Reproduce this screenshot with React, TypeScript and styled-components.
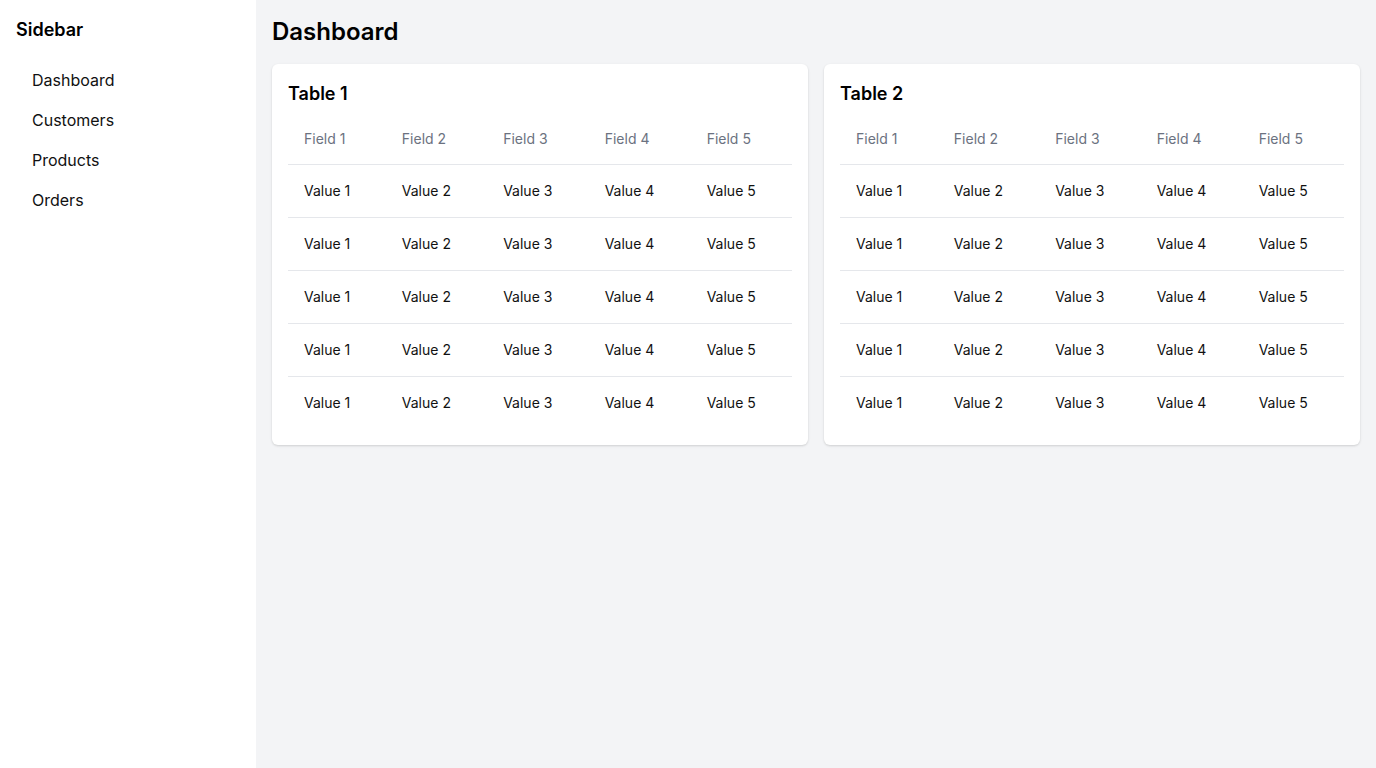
import React from "react";
import styled, { createGlobalStyle } from "styled-components";

const Global = createGlobalStyle`
  * { box-sizing: border-box; }
  html, body { margin: 0; padding: 0; }
  body { font-family: Inter, "Noto Sans", sans-serif; color: #111827; background: #f3f4f6; }
`;

const Layout = styled.div`
  display: flex;
  min-height: 100vh;
`;

const Sidebar = styled.aside`
  width: 256px;
  flex-shrink: 0;
  background: #ffffff;
  padding: 16px;
`;

const SidebarTitle = styled.h2`
  margin: 0 0 16px;
  font-size: 18px;
  line-height: 28px;
  font-weight: 600;
  color: #000;
`;

const NavList = styled.ul`
  list-style: none;
  margin: 0;
  padding: 0;
`;

const NavItem = styled.li`
  padding: 8px 16px;
  font-size: 16px;
  line-height: 24px;
  color: #111;
`;

const Main = styled.main`
  flex: 1;
  padding: 16px;
  background: #f3f4f6;
`;

const PageTitle = styled.h1`
  margin: 0 0 16px;
  font-size: 24px;
  line-height: 32px;
  font-weight: 600;
  color: #000;
`;

const Grid = styled.div`
  display: grid;
  grid-template-columns: 1fr 1fr;
  gap: 16px;
  align-items: start;
`;

const Card = styled.section`
  background: #fff;
  border-radius: 6px;
  padding: 16px;
  box-shadow: 0 1px 3px rgba(0, 0, 0, 0.1), 0 1px 2px rgba(0, 0, 0, 0.06);
`;

const CardTitle = styled.h3`
  margin: 0 0 6px;
  font-size: 18px;
  line-height: 28px;
  font-weight: 600;
  color: #000;
`;

const Table = styled.table`
  width: 100%;
  border-collapse: collapse;
`;

const Th = styled.th`
  text-align: left;
  padding: 15px 16px;
  font-size: 14px;
  line-height: 20px;
  font-weight: 400;
  color: #6b7280;
  border-bottom: 1px solid #e5e7eb;
`;

const Tr = styled.tr<{ $last?: boolean }>`
  border-bottom: ${(p) => (p.$last ? "none" : "1px solid #e5e7eb")};
`;

const Td = styled.td`
  padding: 16px;
  font-size: 14px;
  line-height: 20px;
  color: #111;
`;

const fields = [1, 2, 3, 4, 5];
const rows = [1, 2, 3, 4, 5];

function DataCard({ title }: { title: string }) {
  return (
    <Card>
      <CardTitle>{title}</CardTitle>
      <Table>
        <thead>
          <tr>
            {fields.map((f) => (
              <Th key={f}>Field {f}</Th>
            ))}
          </tr>
        </thead>
        <tbody>
          {rows.map((r, i) => (
            <Tr key={r} $last={i === rows.length - 1}>
              {fields.map((f) => (
                <Td key={f}>Value {f}</Td>
              ))}
            </Tr>
          ))}
        </tbody>
      </Table>
    </Card>
  );
}

export default function App() {
  return (
    <>
      <Global />
      <Layout>
        <Sidebar>
          <SidebarTitle>Sidebar</SidebarTitle>
          <NavList>
            {["Dashboard", "Customers", "Products", "Orders"].map((n) => (
              <NavItem key={n}>{n}</NavItem>
            ))}
          </NavList>
        </Sidebar>
        <Main>
          <PageTitle>Dashboard</PageTitle>
          <Grid>
            <DataCard title="Table 1" />
            <DataCard title="Table 2" />
          </Grid>
        </Main>
      </Layout>
    </>
  );
}
